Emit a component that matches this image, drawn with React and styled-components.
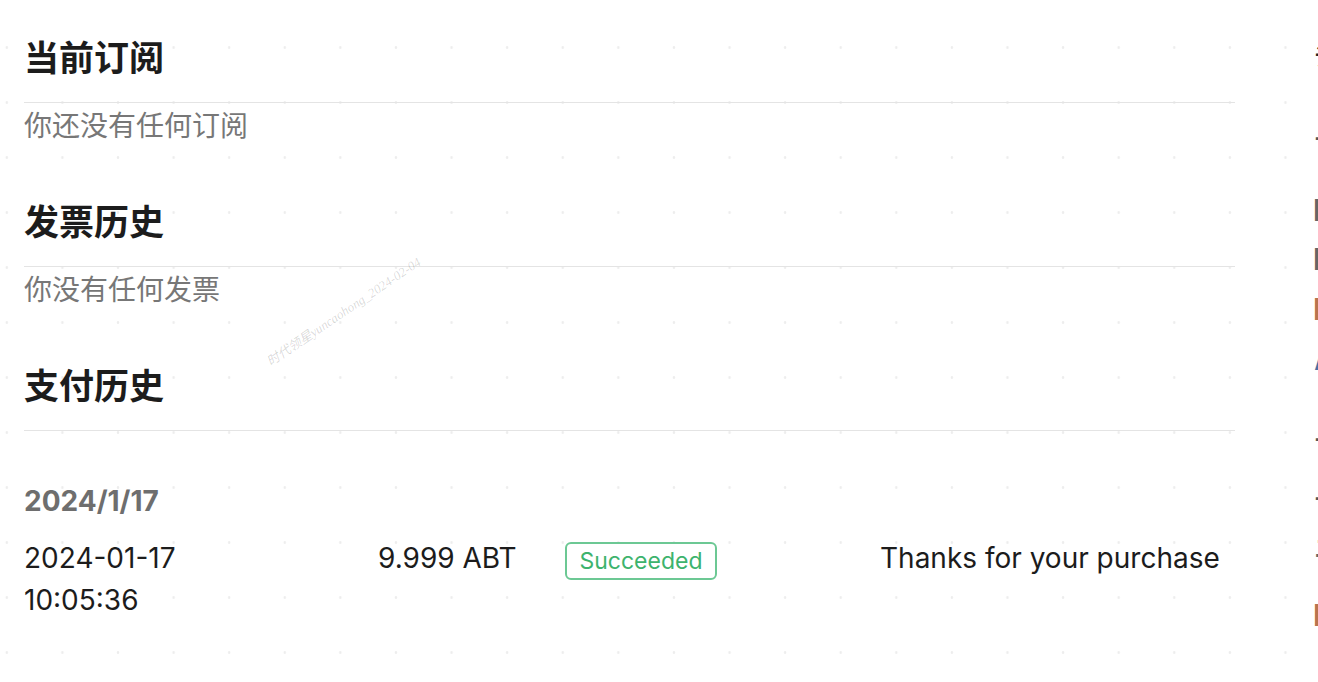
import styled, { createGlobalStyle } from "styled-components";

const GlobalStyle = createGlobalStyle`
  html, body {
    margin: 0;
    padding: 0;
    background: #fff;
    overflow: hidden;
  }
  body {
    font-family: Inter, "Noto Sans CJK SC", sans-serif;
    color: #1f1f1f;
  }
`;

const payments = [
  {
    group: "2024/1/17",
    rows: [
      {
        date: "2024-01-17",
        time: "10:05:36",
        amount: "9.999 ABT",
        status: "Succeeded",
        note: "Thanks for your purchase",
      },
    ],
  },
];

const sideItems = [
  { text: "订阅", tone: "#222", top: 40 },
  { text: "一 账单", tone: "#555", top: 56 },
  { text: "█ 邮箱", tone: "#666", top: 45 },
  { text: "█ 密码", tone: "#666", top: 23 },
  { text: "█ 余额", tone: "#b8744e", top: 24 },
  { text: "A 语言", tone: "#4a6fa5", top: 27 },
  { text: "一 设置", tone: "#555", top: 52 },
  { text: "一 帮助", tone: "#555", top: 33 },
  { text: "二 关于", tone: "#666", top: 23 },
  { text: "█ 退出", tone: "#b8744e", top: 41 },
];

function App() {
  return (
    <Page>
      <GlobalStyle />
      <Main>
        <Section>
          <Heading>当前订阅</Heading>
          <Empty>你还没有任何订阅</Empty>
        </Section>
        <Section>
          <Heading>发票历史</Heading>
          <Empty>你没有任何发票</Empty>
        </Section>
        <Section>
          <Heading>支付历史</Heading>
          {payments.map((g) => (
            <Group key={g.group}>
              <GroupDate>{g.group}</GroupDate>
              {g.rows.map((r) => (
                <PayRow key={r.date + r.time}>
                  <div>
                    {r.date}
                    <br />
                    {r.time}
                  </div>
                  <div>{r.amount}</div>
                  <StatusCell>
                    <Badge>{r.status}</Badge>
                  </StatusCell>
                  <Note>{r.note}</Note>
                </PayRow>
              ))}
            </Group>
          ))}
        </Section>
      </Main>
      <Side>
        {sideItems.map((s, i) => (
          <SideItem key={i} $tone={s.tone} $top={s.top}>
            {s.text}
          </SideItem>
        ))}
      </Side>
      <Watermark>时代领星yuncaohong_2024-02-04</Watermark>
    </Page>
  );
}

const Page = styled.div`
  position: relative;
  display: flex;
  gap: 80px;
  width: 1318px;
  height: 682px;
  overflow: hidden;
  box-sizing: border-box;
  padding: 0 0 0 24px;
  background-color: #fff;
  background-image: radial-gradient(
    circle,
    rgba(0, 0, 0, 0.07) 1px,
    transparent 1.6px
  );
  background-size: 55.6px 55px;
  background-position: -21px 20px;
`;

const Main = styled.main`
  width: 1211px;
  flex-shrink: 0;
  padding-top: 33px;
`;

const Section = styled.section`
  margin-bottom: 52px;
`;

const Heading = styled.h2`
  margin: 0;
  height: 69px;
  font-family: "Noto Sans CJK SC", sans-serif;
  font-size: 35px;
  font-weight: 700;
  line-height: 46px;
  color: #1c1c1c;
  border-bottom: 1px solid #e4e4e4;
`;

const Empty = styled.p`
  margin: 0;
  font-family: "Noto Sans CJK SC", sans-serif;
  font-size: 28px;
  line-height: 42px;
  color: #777;
`;

const Group = styled.div`
  padding-top: 50px;
`;

const GroupDate = styled.div`
  font-family: Inter, sans-serif;
  font-size: 28px;
  font-weight: 700;
  line-height: 40px;
  color: #6e6e6e;
  margin-bottom: 16px;
`;

const PayRow = styled.div`
  display: grid;
  grid-template-columns: 354px 187px 315px 1fr;
  align-items: start;
  font-family: Inter, sans-serif;
  font-size: 28px;
  line-height: 42px;
  color: #1c1c1c;
`;

const StatusCell = styled.div`
  padding-top: 1px;
`;

const Badge = styled.span`
  display: inline-flex;
  align-items: center;
  justify-content: center;
  box-sizing: border-box;
  width: 152px;
  height: 38px;
  border: 2px solid #6cc894;
  border-radius: 6px;
  font-size: 23px;
  color: #3db36d;
`;

const Note = styled.div`
  text-align: right;
  padding-right: 21px;
  white-space: nowrap;
`;

const Side = styled.aside`
  display: flex;
  flex-direction: column;
  flex-shrink: 0;
  width: 260px;
  padding-top: 2px;
`;

const SideItem = styled.div`
  margin-top: ${(p) => p.$top}px;
  font-family: "Noto Sans CJK SC", sans-serif;
  font-size: 22px;
  line-height: 26px;
  font-weight: 600;
  color: ${(p) => p.$tone};
  white-space: nowrap;
`;

const Watermark = styled.div`
  position: absolute;
  left: 262px;
  top: 354px;
  transform: rotate(-34deg);
  transform-origin: left top;
  font-family: "Liberation Serif", "Noto Sans CJK SC", serif;
  font-style: italic;
  font-size: 13px;
  color: rgba(0, 0, 0, 0.16);
  white-space: nowrap;
  pointer-events: none;
`;

export default App;
